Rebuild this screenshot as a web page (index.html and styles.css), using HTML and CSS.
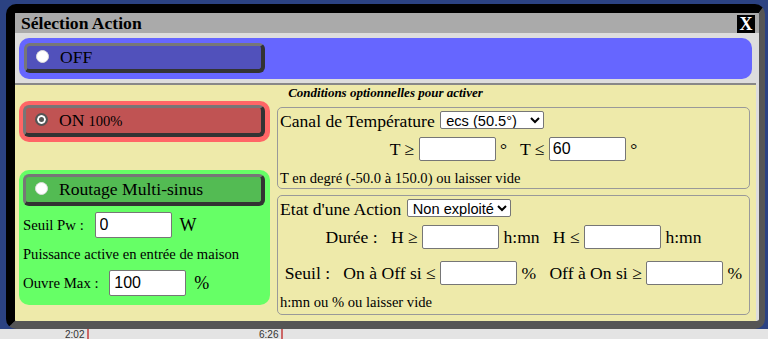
FILE: index.html
```html
<!DOCTYPE html>
<html lang="fr">
<head>
    <meta charset="UTF-8">
    <meta name="viewport" content="width=device-width, initial-scale=1.0">
    <title>Sélection Action</title>
    <link rel="stylesheet" href="styles.css">
</head>
<body>

    <div class="modal">
        <div class="modal-title">
            <span>Sélection Action</span>
            <span class="close-btn">X</span>
        </div>

        <div class="choice choice-off">
            <label class="mode-btn"><input type="radio" name="mode"> OFF</label>
        </div>

        <div class="conditions">
            <div class="cond-title">Conditions optionnelles pour activer</div>

            <div class="cond-body">
                <div class="left-col">
                    <div class="choice choice-on">
                        <label class="mode-btn"><input type="radio" name="mode" checked> ON <small>100%</small></label>
                    </div>

                    <div class="choice choice-pw">
                        <label class="mode-btn"><input type="radio" name="mode"> Routage Multi-sinus</label>
                        <div class="pw-row">Seuil Pw :&nbsp; <input type="text" class="pw-input" value="0"> <span class="unit">W</span></div>
                        <div class="pw-note">Puissance active en entrée de maison</div>
                        <div class="pw-row">Ouvre Max :&nbsp; <input type="text" class="pw-input" value="100"> <span class="unit">%</span></div>
                    </div>
                </div>

                <div class="right-col">
                    <div class="cond-box">
                        <div class="row-head">Canal de Température
                            <select class="sel-temp">
                                <option>ecs (50.5°)</option>
                            </select>
                        </div>
                        <div class="row-center">T ≥ <input type="text" class="cond-input"> °&nbsp;&nbsp; T ≤ <input type="text" class="cond-input" value="60"> °</div>
                        <div class="row-note">T en degré (-50.0 à 150.0) ou laisser vide</div>
                    </div>

                    <div class="cond-box cond-box-action">
                        <div class="row-head">Etat d'une Action
                            <select class="sel-action">
                                <option>Non exploité</option>
                            </select>
                        </div>
                        <div class="row-center">Durée :&nbsp;&nbsp; H ≥ <input type="text" class="cond-input"> h:mn&nbsp;&nbsp; H ≤ <input type="text" class="cond-input"> h:mn</div>
                        <div class="row-center row-seuil">Seuil :&nbsp;&nbsp; On à Off si ≤ <input type="text" class="cond-input"> %&nbsp;&nbsp; Off à On si ≥ <input type="text" class="cond-input"> %</div>
                        <div class="row-note">h:mn ou % ou laisser vide</div>
                    </div>
                </div>
            </div>
        </div>
    </div>

    <div class="axis">
        <span class="tick tick-a">2:02</span>
        <span class="tick tick-b">6:26</span>
    </div>

</body>
</html>
```

FILE: styles.css
```css
/* General Body Styles */
body {
    margin: 0;
    font-family: 'Liberation Serif', 'Times New Roman', serif;
    background: #2b4282;
    overflow: hidden;
}

/* Modal Window */
.modal {
    box-sizing: border-box;
    width: 759px;
    height: 325px;
    margin: 4px 3px 0 6px;
    border-style: solid;
    border-width: 9px 6px 8px 9px;
    border-color: #000 #555 #555 #000;
    border-radius: 10px;
    background-color: #ddd;
    overflow: hidden;
}

.modal-title {
    display: flex;
    justify-content: space-between;
    align-items: center;
    height: 20px;
    padding: 0 4px 0 6px;
    background-color: #aaa;
    font-weight: bold;
    font-size: 17.6px;
}

.close-btn {
    width: 18px;
    height: 18px;
    margin-top: 2px;
    line-height: 19px;
    text-align: center;
    background-color: #000;
    color: #fff;
    font-size: 18px;
}

/* Choice Boxes */
.choice {
    box-sizing: border-box;
    padding: 4px 5px 5px 4px;
    border-radius: 10px;
}

.choice-off {
    height: 41px;
    margin: 5px 7px 4px 4px;
    padding-top: 5px;
    padding-left: 5px;
    background-color: #6666ff;
}

.choice-on {
    height: 41px;
    background-color: #ff6666;
}

.choice-pw {
    height: 135px;
    margin-top: 28px;
    background-color: #66ff66;
}

.mode-btn {
    box-sizing: border-box;
    display: flex;
    align-items: center;
    width: 242px;
    height: 32px;
    padding-left: 9px;
    border-style: solid;
    border-width: 3px 4px 4px 3px;
    border-color: #777 #333 #333 #777;
    border-radius: 6px;
    font-size: 17.6px;
    color: #000;
}

.mode-btn small {
    font-size: 14.6px;
    margin-left: 4px;
    margin-top: 2px;
}

.choice-off .mode-btn {
    width: 241px;
    height: 30px;
    background-color: #5151bb;
}

.choice-on .mode-btn {
    background-color: #c05353;
}

.choice-pw .mode-btn {
    height: 32px;
    background-color: #53bb53;
}

/* Radio Buttons */
input[type="radio"] {
    appearance: none;
    box-sizing: border-box;
    width: 13px;
    height: 13px;
    margin: 0 11px 2px 0;
    border: 1px solid #ddd;
    border-radius: 50%;
    background-color: #fff;
}

input[type="radio"]:checked {
    border: 2px solid #555;
    background-color: #555;
    box-shadow: inset 0 0 0 2px #fff;
}

/* Conditions Section */
.conditions {
    height: 236px;
    margin-right: 3px;
    border-top: 2px solid #888;
    background-color: #eeeaaa;
}

.cond-title {
    height: 16px;
    line-height: 16px;
    text-align: center;
    font-weight: bold;
    font-style: italic;
    font-size: 13px;
}

.cond-body {
    display: flex;
    padding-left: 4px;
}

.left-col {
    width: 251px;
}

.right-col {
    width: 473px;
    margin-left: 7px;
    padding-top: 6px;
}

/* Routage Parameters */
.pw-row {
    display: flex;
    align-items: center;
    height: 26px;
    margin-top: 6px;
    font-size: 14.8px;
}

.pw-row + .pw-note + .pw-row {
    margin-top: 8px;
}

.pw-note {
    margin-top: 8px;
    line-height: 16px;
    font-size: 14.6px;
}

.pw-input {
    box-sizing: border-box;
    width: 77px;
    height: 26px;
    margin: 0 8px 0 7px;
    padding: 0 4px;
    border: 1px solid #767676;
    border-radius: 2px;
    font-family: 'Liberation Sans', Arial, sans-serif;
    font-size: 16px;
}

.unit {
    font-size: 18px;
}

/* Condition Boxes */
.cond-box {
    box-sizing: border-box;
    padding: 3px 2px 2px;
    border: 1px solid #999;
    border-radius: 5px;
    font-size: 17.6px;
}

.cond-box-action {
    margin-top: 6px;
    padding-bottom: 4px;
}

.row-head {
    height: 20px;
    line-height: 20px;
}

.row-head select {
    box-sizing: border-box;
    height: 18px;
    margin-left: 1px;
    padding: 0 0 0 1px;
    border: 1px solid #767676;
    border-radius: 2px;
    background-color: #fff;
    font-family: 'Liberation Sans', Arial, sans-serif;
    font-size: 14.6px;
    vertical-align: 1px;
}

.sel-temp {
    width: 104px;
}

.sel-action {
    width: 104px;
    height: 19px;
}

.row-center {
    height: 24px;
    line-height: 24px;
    margin-top: 6px;
    text-align: center;
}

.row-seuil {
    margin-top: 12px;
}

.cond-input {
    box-sizing: border-box;
    width: 77px;
    height: 24px;
    padding: 0 3px;
    border: 1px solid #767676;
    border-radius: 2px;
    font-family: 'Liberation Sans', Arial, sans-serif;
    font-size: 16px;
    vertical-align: top;
}

.row-note {
    margin-top: 9px;
    line-height: 16px;
    font-size: 14.6px;
}

/* Chart Axis behind the modal */
.axis {
    position: relative;
    height: 10px;
    background-color: #e4e4e4;
    font-family: 'Liberation Sans', Arial, sans-serif;
    font-size: 10px;
    line-height: 12px;
    color: #333;
}

.tick {
    position: absolute;
    top: 0;
    padding-right: 3px;
    border-right: 2px solid #c66;
}

.tick-a {
    left: 65px;
}

.tick-b {
    left: 259px;
}
```
